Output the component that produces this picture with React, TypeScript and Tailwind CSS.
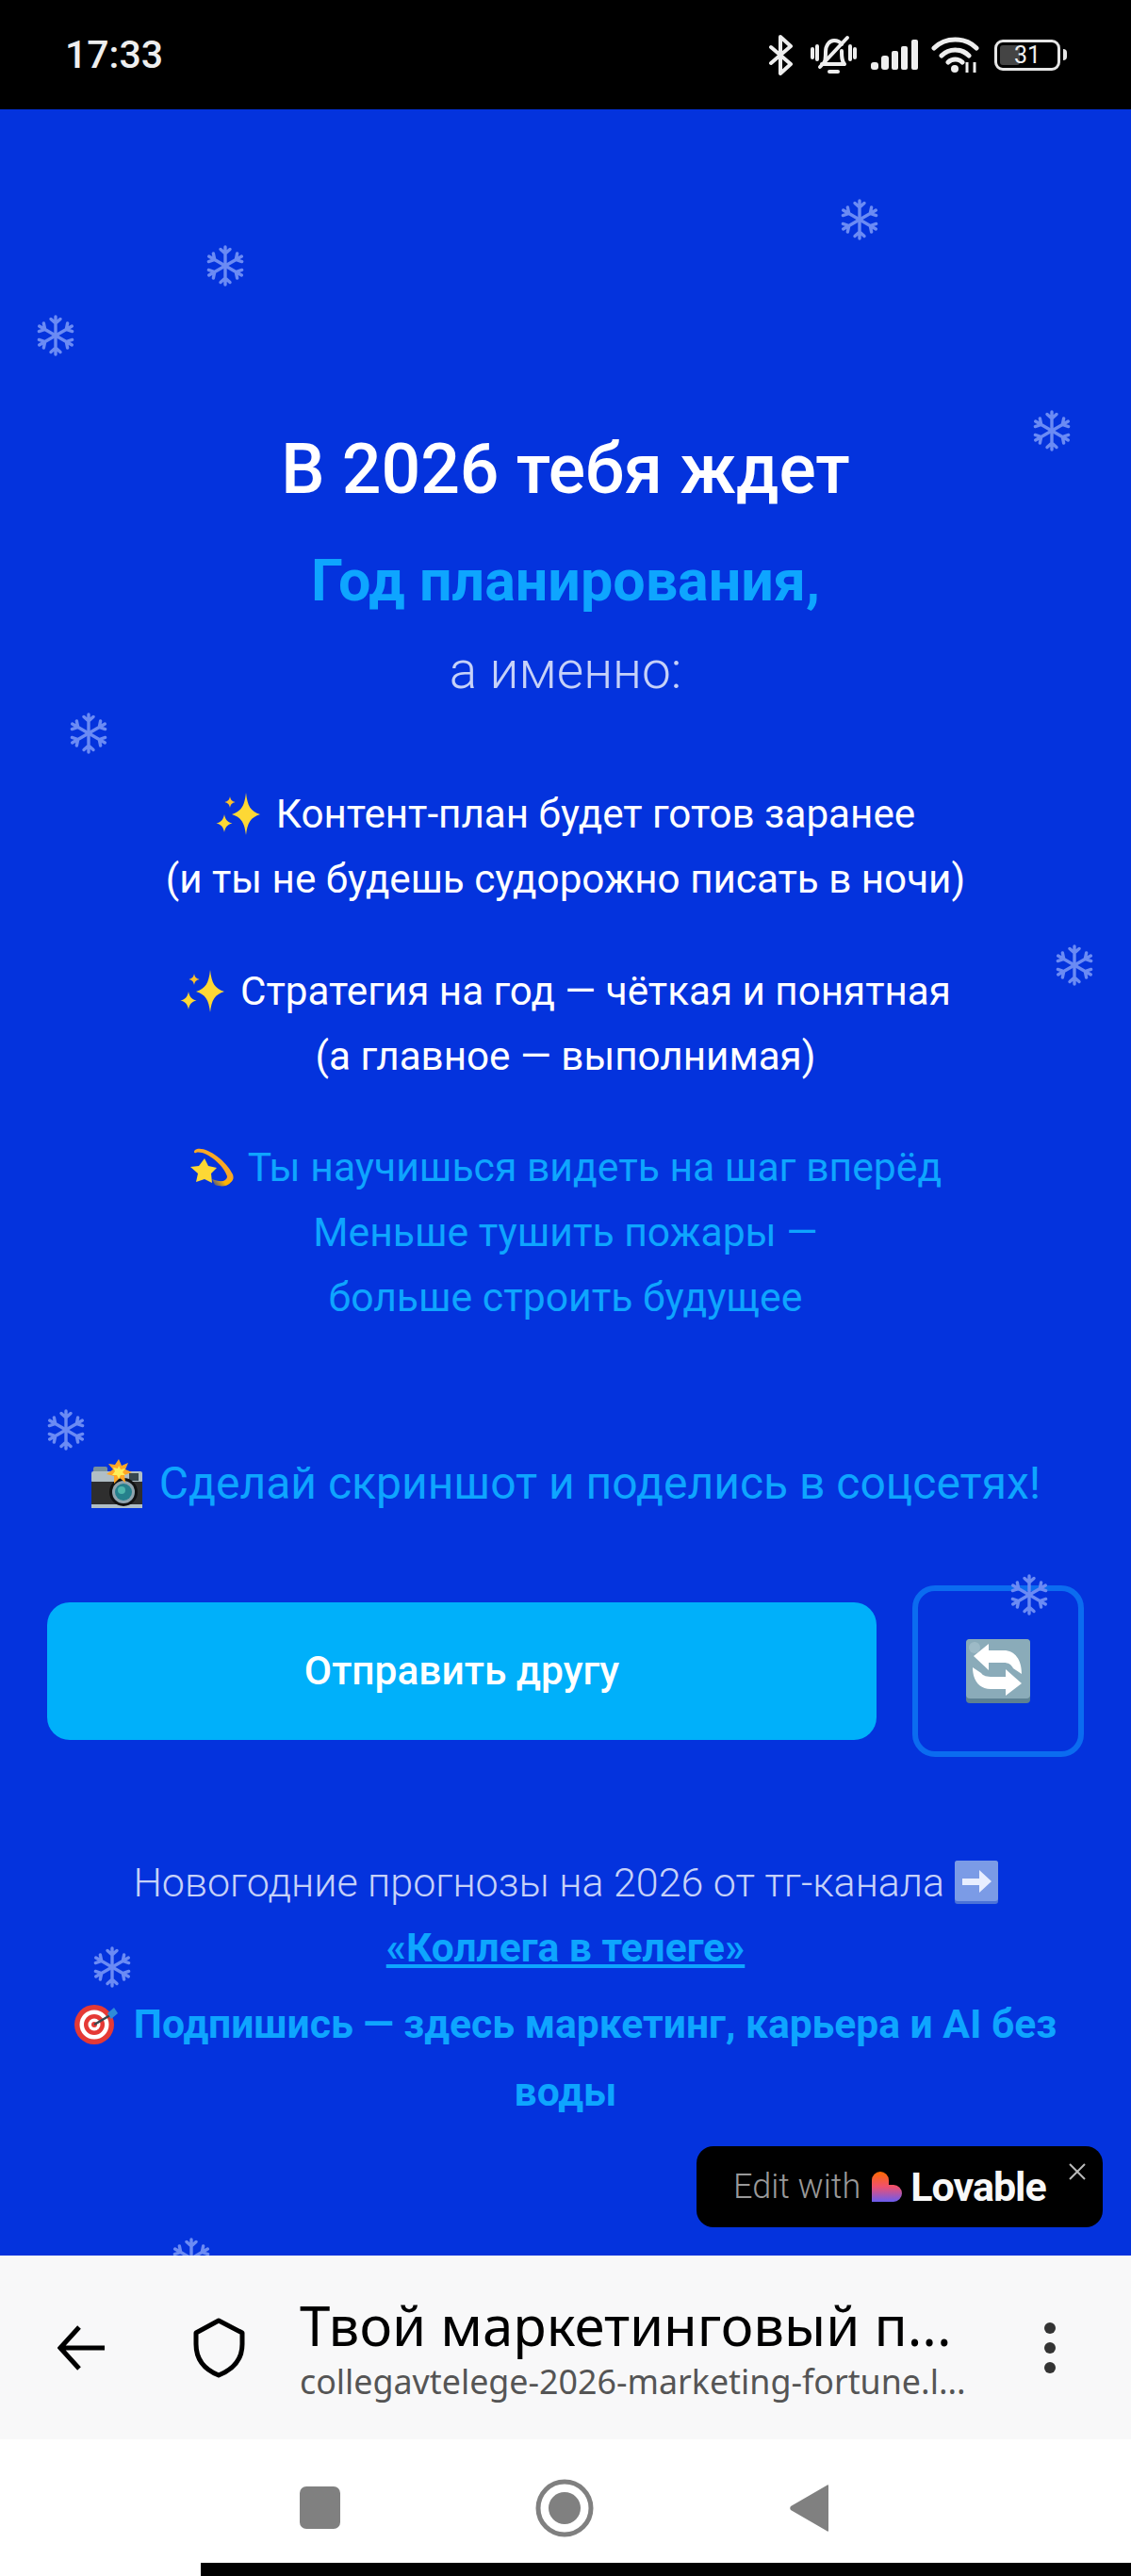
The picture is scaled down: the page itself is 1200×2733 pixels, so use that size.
import type { ReactNode } from 'react'

const snowflakes = [
  { x: 912, y: 117 },
  { x: 239, y: 166 },
  { x: 59, y: 240 },
  { x: 1116, y: 341 },
  { x: 94, y: 662 },
  { x: 1140, y: 908 },
  { x: 70, y: 1401 },
  { x: 1092, y: 1576 },
  { x: 119, y: 1971 },
  { x: 203, y: 2280 },
]

function Snowflake({ x, y }: { x: number; y: number }) {
  return (
    <svg
      viewBox="0 0 42 46"
      className="absolute h-[46px] w-[42px] text-[#6b8bf4]"
      style={{ left: x - 21, top: y - 23 }}
    >
      <g stroke="currentColor" strokeWidth="3.4" fill="none" strokeLinecap="round" strokeLinejoin="round">
        {[0, 60, 120, 180, 240, 300].map((a) => (
          <g key={a} transform={`rotate(${a} 21 23)`}>
            <path d="M21 23V3M21 10l-5-4.500M21 10l5-4.500" />
          </g>
        ))}
      </g>
    </svg>
  )
}

function Sparkles() {
  return (
    <svg viewBox="0 0 47 45" className="mr-[17px] inline-block h-[45px] w-[47px] align-[-8px]">
      <path d="M32 0c1.500 14 5 20 15 23-10 3-13.500 9-15 22-1.500-13-5-19-15-22 10-3 13.500-9 15-23z" fill="#fdd835" />
      <path d="M15 4c.7 3.500 2 5 5.500 6-3.500 1-4.800 2.500-5.500 6-.7-3.500-2-5-5.500-6 3.500-1 4.800-2.500 5.500-6z" fill="#fbc02d" />
      <path d="M9 23c1 5.500 3 8 8.500 9.500-5.500 1.500-7.500 4-8.500 9.500-1-5.500-3-8-8.500-9.500C6 31 8 28.500 9 23z" fill="#fdd835" />
    </svg>
  )
}

function Dizzy() {
  return (
    <svg viewBox="0 0 48 47" className="mr-[14px] inline-block h-[47px] w-[48px] align-[-9px]">
      <defs>
        <linearGradient id="swoosh" x1="0.2" y1="1" x2="0.7" y2="0.8">
          <stop offset="0" stopColor="#5a5f7a" />
          <stop offset="1" stopColor="#ffb300" />
        </linearGradient>
      </defs>
      <path d="M6 5C14-1 38 14 46 31c3 9-6 12-20 8 8 0 14-1 14-6C36 20 16 5 7 8c-2 1-3-1-1-3z" fill="#f9a825" />
      <path d="M24 36c8 3 18 4 21-2 1 7-7 12-18 8z" fill="url(#swoosh)" />
      <path d="M16 14l4 8 9 2-6 6 1 10-8-4-9 3 2-9-8-7 9-1z" fill="#fdd835" />
    </svg>
  )
}

function Camera() {
  return (
    <svg viewBox="0 0 56 52" className="mr-[17px] inline-block h-[52px] w-[56px] align-[-10px]">
      <rect x="3" y="8" width="15" height="8" rx="2" fill="#78909c" />
      <rect x="1" y="13" width="54" height="12" rx="2" fill="#b0bec5" />
      <rect x="1" y="24" width="54" height="24" fill="#2e2e2e" />
      <rect x="1" y="48" width="54" height="4" fill="#b0bec5" />
      <rect x="41" y="15" width="10" height="8" fill="#37474f" />
      <circle cx="35" cy="35" r="15" fill="#111" />
      <circle cx="35" cy="35" r="12" fill="#90a4ae" />
      <circle cx="35" cy="35" r="9" fill="#26808c" />
      <circle cx="33" cy="33" r="4" fill="#4db6ac" />
      <path d="M30 0l3 7 7-3-3 7 7 3-8 3 1 8-6-5-6 6v-8l-8-2 7-5-5-6 7 1z" fill="#ffa726" />
      <path d="M30 7l2 4 5-1-3 4 3 3-5 0-2 4-2-4-5 0 3-4-2-4 5 1z" fill="#ffee58" />
    </svg>
  )
}

function RepeatKey() {
  return (
    <svg viewBox="0 0 68 68" className="h-[68px] w-[68px]">
      <rect x="0" y="0" width="68" height="68" rx="4" fill="#5d8192" />
      <rect x="0" y="0" width="68" height="63" rx="4" fill="#8aabb9" />
      <circle cx="9" cy="9" r="6" fill="#9dbac6" />
      <path d="M8 18L24 5v7h16c12 0 19 10 19 25l-9-6c-2-4-5-6-10-6H24v8z" fill="#fff" />
      <path d="M59 47L42 60v-7H26C14 53 7 44 7 30l9 6c2 3 6 4 12 4h14v-8z" fill="#fff" />
    </svg>
  )
}

function ArrowKey() {
  return (
    <svg viewBox="0 0 46 46" className="inline-block h-[46px] w-[46px] align-[-8px]">
      <rect width="46" height="46" rx="3" fill="#4b73d8" />
      <rect width="46" height="43" rx="3" fill="#7b9be6" />
      <path d="M8 19h18v-9l13 12-13 12v-8H8z" fill="#e8eeff" />
    </svg>
  )
}

function Target() {
  return (
    <svg viewBox="0 0 46 44" className="mr-[17px] inline-block h-[44px] w-[46px] align-[-8px]">
      <circle cx="21" cy="22" r="21" fill="#e53935" />
      <circle cx="21" cy="22" r="15.500" fill="#fff" />
      <circle cx="21" cy="22" r="11" fill="#e53935" />
      <circle cx="21" cy="22" r="6.500" fill="#fff" />
      <circle cx="21" cy="22" r="3" fill="#e53935" />
      <path d="M21 22L38 12" stroke="#37474f" strokeWidth="2.500" />
      <path d="M35 10l7-6 4 6-7 6z" fill="#2e8bd8" />
    </svg>
  )
}

function TextBlock({ children, className }: { children: ReactNode; className: string }) {
  return <div className={`text-center leading-[69px] ${className}`}>{children}</div>
}

function StatusBar() {
  return (
    <div className="relative flex h-[116px] shrink-0 items-center justify-between bg-black pl-[69px] pr-[68px] pt-[27px] pb-[27px] text-[#eee]">
      <span className="text-[41px] font-medium leading-none">17:33</span>
      <div className="flex items-center">
        <svg viewBox="0 0 28 43" className="mr-[17px] h-[43px] w-[28px]">
          <path d="M3 13l21 18-11 10V2l11 10L3 30" fill="none" stroke="#eee" strokeWidth="4" strokeLinejoin="round" strokeLinecap="round" />
        </svg>
        <svg viewBox="0 0 49 42" className="mr-[15px] h-[42px] w-[49px]">
          <g fill="none" stroke="#eee" strokeWidth="4" strokeLinecap="round" strokeLinejoin="round">
            <path d="M14 31c2-3 2-8 2-13 0-7 4-12 9-12 3 0 6 1 8 4M33 17c0 6 0 11 3 14H12" />
            <path d="M10 34L39 3" />
            <path d="M2 15v9M7 12v14M47 15v9M42 12v14" />
            <path d="M20 39h9" />
          </g>
        </svg>
        <svg viewBox="0 0 50 32" className="mr-[14px] h-[32px] w-[50px]">
          <g fill="#eee">
            <rect x="0" y="24" width="8" height="8" rx="3" />
            <rect x="11" y="17" width="8" height="15" rx="3" />
            <rect x="22" y="12" width="7" height="20" rx="2" />
            <rect x="32" y="7" width="7" height="25" rx="2" />
            <rect x="43" y="0" width="7" height="32" rx="2" />
          </g>
        </svg>
        <svg viewBox="0 0 51 40" className="mr-[16px] h-[40px] w-[51px]">
          <g fill="none" stroke="#eee" strokeWidth="5" strokeLinecap="round">
            <path d="M3 13c12-12 33-12 45 0" />
            <path d="M11 21c8-8 21-8 29 0" />
            <path d="M18 28c4-4 11-4 15 0" />
          </g>
          <circle cx="25" cy="35" r="4" fill="#eee" />
          <path d="M38 28v11M46 28v11" stroke="#eee" strokeWidth="3" />
        </svg>
        <div className="relative flex h-[33px] w-[70px] items-center overflow-hidden rounded-[9px] border-[3px] border-[#e6e6e6]">
          <div className="absolute bottom-[3px] left-[3px] top-[3px] w-[21px] rounded-[3px] bg-[#444]" />
          <span className="relative w-full text-center text-[25px] leading-none text-[#eee]">31</span>
        </div>
        <div className="ml-[3px] h-[12px] w-[4px] rounded-r-full bg-[#e6e6e6]" />
      </div>
    </div>
  )
}

function BrowserBar() {
  return (
    <div className="flex h-[195px] shrink-0 items-center bg-[#f8f8f9]">
      <svg viewBox="0 0 50 48" className="ml-[61px] mr-[94px] h-[48px] w-[50px]">
        <path d="M50 24H3M23 2L3 24l20 22" fill="none" stroke="#000" strokeWidth="5" />
      </svg>
      <svg viewBox="0 0 55 64" className="mr-[58px] h-[64px] w-[55px]">
        <path d="M27 3L52 16v12c0 16-10 27-25 33C12 55 3 44 3 28V16z" fill="none" stroke="#000" strokeWidth="5" strokeLinejoin="round" />
      </svg>
      <div className="w-[740px] pb-[4px] font-['Noto_Sans',sans-serif]">
        <div className="text-[58.200px] leading-[74px] text-black">Твой маркетинговый п...</div>
        <div className="text-[35.800px] leading-[44px] text-[#555]">collegavtelege-2026-marketing-fortune.l...</div>
      </div>
      <div className="ml-[50px] flex flex-col gap-[9px]">
        <div className="h-[12px] w-[12px] rounded-full bg-[#333]" />
        <div className="h-[12px] w-[12px] rounded-full bg-[#333]" />
        <div className="h-[12px] w-[12px] rounded-full bg-[#333]" />
      </div>
    </div>
  )
}

function NavBar() {
  return (
    <div className="flex h-[145px] shrink-0 flex-col bg-white">
      <div className="flex h-[131px] items-center pl-[318px] pt-[14px]">
        <div className="h-[45px] w-[43px] rounded-[7px] bg-[#808080]" />
        <svg viewBox="0 0 62 62" className="ml-[207px] h-[62px] w-[62px]">
          <circle cx="31" cy="31" r="28" fill="none" stroke="#808080" strokeWidth="5" />
          <circle cx="31" cy="31" r="17" fill="#808080" />
        </svg>
        <svg viewBox="0 0 41 50" className="ml-[208px] h-[50px] w-[41px]">
          <path d="M41 1v48c0 1-1 1-2 0L1 27c-1-1-1-3 0-4L39 1c1-1 2-1 2 0z" fill="#808080" />
        </svg>
      </div>
      <div className="ml-[213px] h-[14px] flex-1 bg-black" />
    </div>
  )
}

export default function App() {
  return (
    <div className="flex h-[2733px] w-[1200px] flex-col overflow-hidden bg-white font-['Roboto',sans-serif]">
      <StatusBar />
      <main className="relative flex flex-1 flex-col items-center overflow-hidden bg-[#0433dd] pt-[338px]">
        {snowflakes.map((s) => (
          <Snowflake key={`${s.x}-${s.y}`} x={s.x} y={s.y} />
        ))}

        <h1 className="text-[73.400px] font-medium leading-[88px] text-white">В 2026 тебя ждет</h1>
        <h2 className="mt-[39px] text-[61px] font-bold leading-[70px] text-[#0ea5ff]">Год планирования,</h2>
        <p className="mt-[25px] text-[55px] font-light leading-[70px] text-[#c6d1f8]">а именно:</p>

        <TextBlock className="mt-[83px] text-[42.200px] text-white">
          <Sparkles />Контент-план будет готов заранее
          <br />
          (и ты не будешь судорожно писать в ночи)
        </TextBlock>
        <TextBlock className="mt-[50px] text-[42.200px] text-white">
          <Sparkles />Стратегия на год — чёткая и понятная
          <br />
          (а главное — выполнимая)
        </TextBlock>
        <TextBlock className="mt-[49px] text-[42.700px] text-[#0ea5ff]">
          <Dizzy />Ты научишься видеть на шаг вперёд
          <br />
          Меньше тушить пожары —
          <br />
          больше строить будущее
        </TextBlock>

        <TextBlock className="mt-[128px] whitespace-nowrap text-[48px] text-[#0ea5ff]">
          <Camera />Сделай скриншот и поделись в соцсетях!
        </TextBlock>

        <div className="mt-[74px] flex w-full items-center pl-[50px] pr-[50px]">
          <button className="h-[146px] w-[880px] rounded-[24px] bg-[#00b0fa] text-[42.500px] font-medium text-white">
            Отправить другу
          </button>
          <button className="ml-[38px] flex h-[182px] w-[182px] items-center justify-center rounded-[24px] border-[6px] border-[#0b6cf0]">
            <RepeatKey />
          </button>
        </div>

        <TextBlock className="mt-[99px] text-[43px] font-light text-[#c6d1f8]">
          Новогодние прогнозы на 2026 от тг-канала <ArrowKey />
        </TextBlock>
        <a className="text-[42.500px] font-bold leading-[69px] text-[#0ea5ff] underline">«Коллега в телеге»</a>
        <TextBlock className="mt-[10px] w-[1100px] text-[42.600px] font-bold leading-[72px] text-[#0ea5ff]">
          <Target />Подпишись — здесь маркетинг, карьера и AI без воды
        </TextBlock>

        <div className="absolute left-[739px] top-[2161px] flex h-[86px] w-[431px] items-center rounded-[18px] bg-black pl-[39px]">
          <span className="text-[36px] font-light text-[#999]">Edit with</span>
          <svg viewBox="0 0 32 32" className="ml-[12px] h-[32px] w-[32px]">
            <defs>
              <linearGradient id="lovable" x1="0" y1="0" x2="0" y2="1">
                <stop offset="0" stopColor="#ff6a00" />
                <stop offset="0.5" stopColor="#f0506e" />
                <stop offset="1" stopColor="#6a5cf0" />
              </linearGradient>
            </defs>
            <path d="M0 9a9 9 0 0 1 18 0v5h5a9 9 0 0 1 0 18H0z" fill="url(#lovable)" />
          </svg>
          <span className="ml-[9px] text-[43px] font-bold tracking-[-1px] text-[#f8f8f8]">Lovable</span>
          <svg viewBox="0 0 18 18" className="absolute right-[18px] top-[18px] h-[18px] w-[18px]">
            <path d="M1 1l16 16M17 1L1 17" stroke="#bbb" strokeWidth="2" />
          </svg>
        </div>
      </main>
      <BrowserBar />
      <NavBar />
    </div>
  )
}
